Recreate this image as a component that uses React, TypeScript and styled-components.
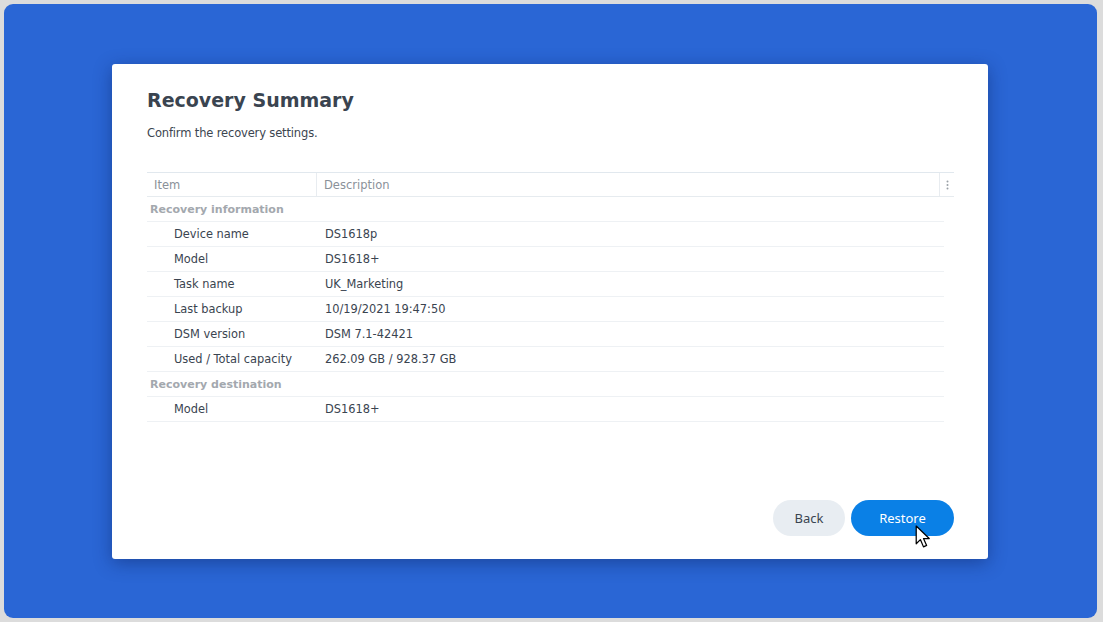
import React from "react";
import styled, { createGlobalStyle } from "styled-components";

const Global = createGlobalStyle`
  html, body { margin: 0; padding: 0; background: #dcdcdc; }
  body { font-family: "DejaVu Sans", Verdana, sans-serif; }
  * { box-sizing: border-box; }
`;

const Screen = styled.div`
  width: 1103px;
  height: 622px;
  padding: 4px 6px 4px 4px;
  background: #dcdcdc;
`;

const Desktop = styled.div`
  width: 100%;
  height: 100%;
  background: #2a66d5;
  border-radius: 9px;
  padding: 60px 0 0 108px;
`;

const Dialog = styled.div`
  width: 876px;
  height: 495px;
  background: #fff;
  border-radius: 3px;
  box-shadow: 0 4px 18px rgba(10, 30, 90, 0.45);
  padding: 24px 34px 23px 35px;
  display: flex;
  flex-direction: column;
`;

const Title = styled.h1`
  margin: 0;
  font-size: 19px;
  line-height: 24px;
  font-weight: bold;
  color: #3a4450;
`;

const Subtitle = styled.p`
  margin: 13px 0 0;
  font-size: 11.5px;
  letter-spacing: -0.15px;
  line-height: 16px;
  color: #3c4550;
`;

const Table = styled.div`
  margin-top: 31px;
  border-top: 1px solid #e1e8ee;
`;

const HeaderRow = styled.div`
  display: grid;
  grid-template-columns: 170px 1fr 14px;
  height: 24px;
  border-bottom: 1px solid #e6ebef;
  font-size: 11.5px;
  color: #8a9199;
`;

const HeaderCell = styled.div<{ $divider?: boolean }>`
  display: flex;
  align-items: center;
  padding-left: 7px;
  border-right: ${(p) => (p.$divider ? "1px solid #e8ecf0" : "none")};
`;

const Kebab = styled.div`
  display: flex;
  align-items: center;
  justify-content: center;
`;

const Body = styled.div`
  margin-right: 10px;
`;

const Row = styled.div`
  display: grid;
  grid-template-columns: 170px 1fr;
  height: 25px;
  border-bottom: 1px solid #eef1f4;
  font-size: 11.4px;
  color: #3a4450;
  align-items: center;
`;

const GroupLabel = styled.div`
  grid-column: 1 / span 2;
  padding-left: 3px;
  font-weight: bold;
  font-size: 11px;
  color: #a3a8ae;
`;

const ItemLabel = styled.div`
  padding-left: 27px;
`;

const ItemValue = styled.div`
  padding-left: 8px;
`;

const Footer = styled.div`
  margin-top: auto;
  display: flex;
  justify-content: flex-end;
  gap: 6px;
`;

const Button = styled.button<{ $primary?: boolean }>`
  position: relative;
  height: 36px;
  border: none;
  border-radius: 18px;
  padding: 0;
  width: ${(p) => (p.$primary ? "103px" : "72px")};
  background: ${(p) => (p.$primary ? "#0a80e6" : "#e8edf2")};
  color: ${(p) => (p.$primary ? "#ffffff" : "#3a4450")};
  font-family: "Noto Sans", "Open Sans", sans-serif;
  font-size: 13px;
  cursor: pointer;
`;

const Cursor = styled.svg`
  position: absolute;
  left: 64px;
  top: 25px;
`;

const sections: { group: string; items: [string, string][] }[] = [
  {
    group: "Recovery information",
    items: [
      ["Device name", "DS1618p"],
      ["Model", "DS1618+"],
      ["Task name", "UK_Marketing"],
      ["Last backup", "10/19/2021 19:47:50"],
      ["DSM version", "DSM 7.1-42421"],
      ["Used / Total capacity", "262.09 GB / 928.37 GB"],
    ],
  },
  {
    group: "Recovery destination",
    items: [["Model", "DS1618+"]],
  },
];

export default function App() {
  return (
    <>
      <Global />
      <Screen>
        <Desktop>
          <Dialog>
            <Title>Recovery Summary</Title>
            <Subtitle>Confirm the recovery settings.</Subtitle>
            <Table>
              <HeaderRow>
                <HeaderCell $divider>Item</HeaderCell>
                <HeaderCell $divider>Description</HeaderCell>
                <Kebab>
                  <svg width="3" height="10" viewBox="0 0 3 10">
                    <circle cx="1.5" cy="1.5" r="1" fill="#9aa0a6" />
                    <circle cx="1.5" cy="5" r="1" fill="#9aa0a6" />
                    <circle cx="1.5" cy="8.5" r="1" fill="#9aa0a6" />
                  </svg>
                </Kebab>
              </HeaderRow>
              <Body>
                {sections.map((s) => (
                  <React.Fragment key={s.group}>
                    <Row>
                      <GroupLabel>{s.group}</GroupLabel>
                    </Row>
                    {s.items.map(([k, v]) => (
                      <Row key={s.group + k}>
                        <ItemLabel>{k}</ItemLabel>
                        <ItemValue>{v}</ItemValue>
                      </Row>
                    ))}
                  </React.Fragment>
                ))}
              </Body>
            </Table>
            <Footer>
              <Button>Back</Button>
              <Button $primary>
                Restore
                <Cursor width="17" height="25" viewBox="0 0 16 24">
                  <path
                    d="M1 1 L1 18 L5 14 L8 21 L11 19.6 L8 13 L13.5 13 Z"
                    fill="#fff"
                    stroke="#000"
                    strokeWidth="1.2"
                    strokeLinejoin="round"
                  />
                </Cursor>
              </Button>
            </Footer>
          </Dialog>
        </Desktop>
      </Screen>
    </>
  );
}
